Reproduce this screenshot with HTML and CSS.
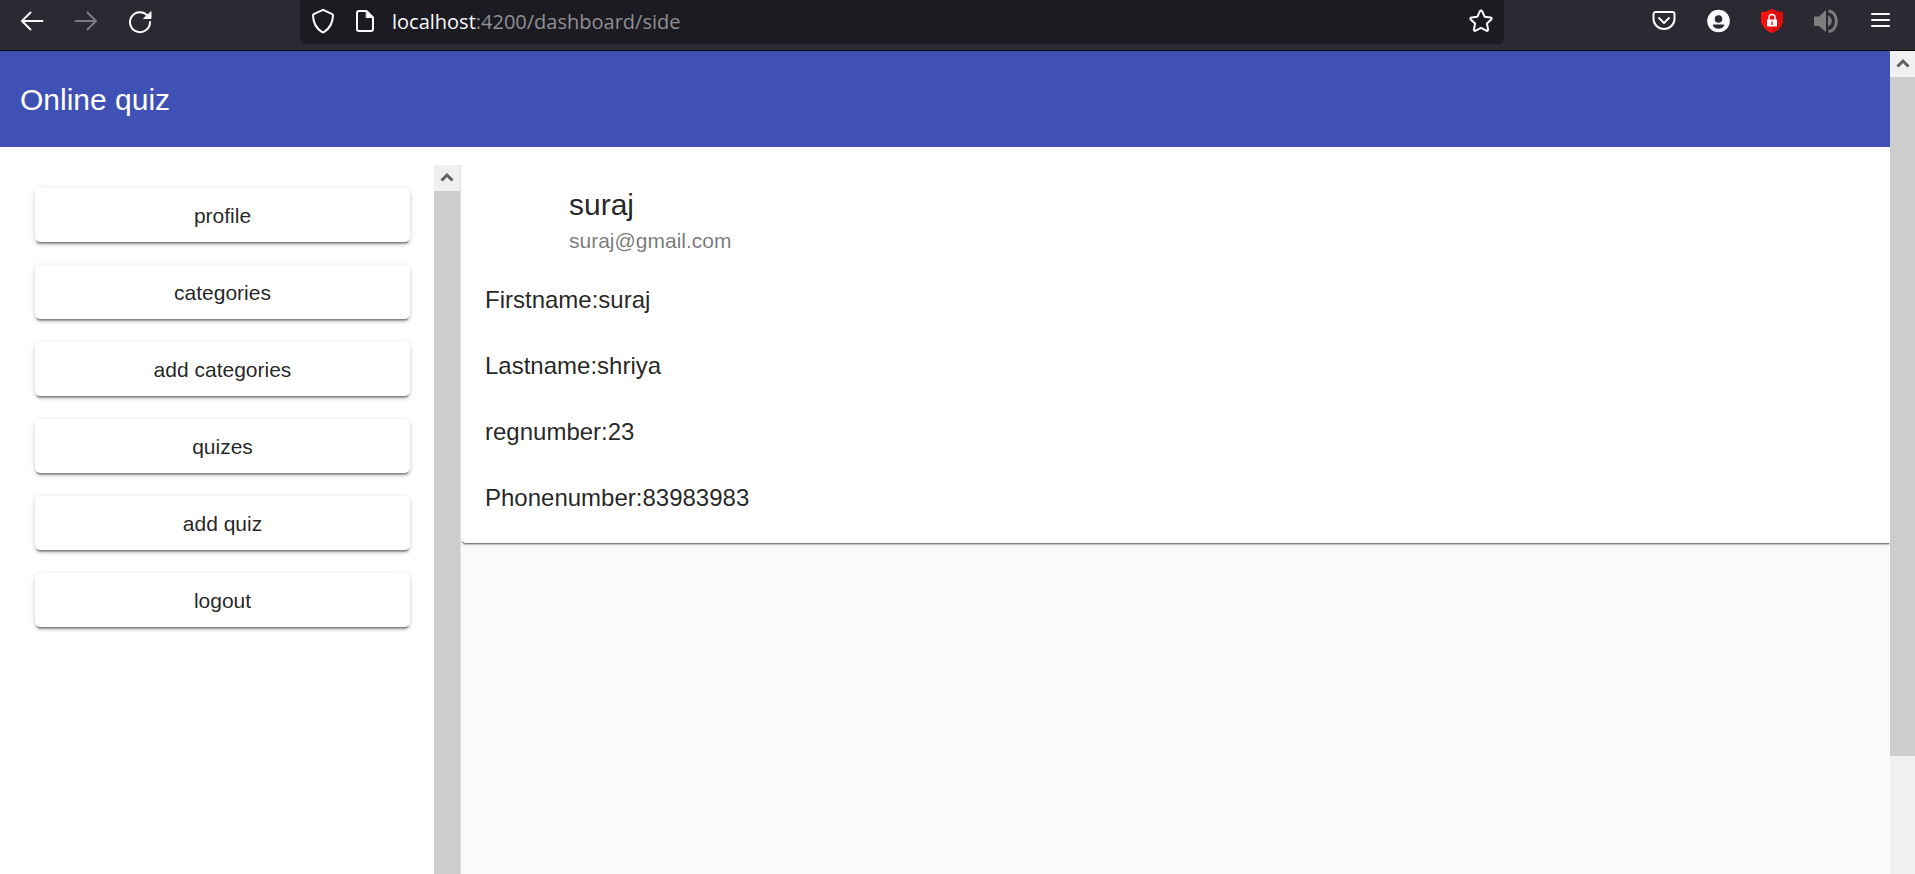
FILE: index.html
```
<!DOCTYPE html>
<html lang="en">
<head>
<meta charset="utf-8">
<title>Online quiz</title>
<link rel="stylesheet" href="styles.css">
</head>
<body>
<div class="browser">
  <div class="chrome">
    <nav class="chrome-nav" aria-label="Browser navigation">
      <button class="tool" aria-label="Back">
        <svg class="icon" viewBox="0 0 26 26"><path d="M23.500 13H3.500M11.500 4.500L3 13l8.500 8.500"/></svg>
      </button>
      <button class="tool tool-off" aria-label="Forward">
        <svg class="icon" viewBox="0 0 26 26"><path d="M2.500 13h20M14.500 4.500L23 13l-8.500 8.500"/></svg>
      </button>
      <button class="tool" aria-label="Reload">
        <svg class="icon" viewBox="0 0 26 26"><path d="M20.200 7.200A10 10 0 1 0 23 14"/><path class="solid" d="M24 4v6.500H17z"/></svg>
      </button>
    </nav>
    <div class="address">
      <button class="tool tool-small" aria-label="Tracking protection">
        <svg class="icon" viewBox="0 0 26 26"><path d="M13 1.800l9.300 4.400c.5.200.7.600.7 1.200-.2 7-3.300 13-8.800 16.400-.8.500-1.600.5-2.400 0C6.300 20.400 3.200 14.400 3 7.400c0-.6.200-1 .7-1.200z"/></svg>
      </button>
      <button class="tool tool-small" aria-label="Site information">
        <svg class="icon" viewBox="0 0 26 26"><path d="M14.500 3H7a2 2 0 0 0-2 2v16a2 2 0 0 0 2 2h12a2 2 0 0 0 2-2V9.500z"/><path class="solid" d="M14.500 2.500L21.500 9.500h-7z"/></svg>
      </button>
      <div class="url" role="textbox" aria-label="Address"><span class="url-host">localhost</span>:4200/dashboard/side</div>
      <button class="tool tool-small" aria-label="Bookmark this page">
        <svg class="icon" viewBox="0 0 26 26"><path d="M13 2.500c.5 0 .9.300 1.100.700l2.500 5.500 6 .7c1 .1 1.500 1.200.7 2l-4.400 4.100 1.200 6c.2 1-.8 1.700-1.700 1.200L13 19.800l-5.400 2.900c-.9.500-1.900-.2-1.700-1.200l1.200-6-4.400-4.100c-.8-.8-.3-1.900.7-2l6-.7 2.500-5.500c.2-.4.600-.7 1.100-.7z"/></svg>
      </button>
    </div>
    <div class="chrome-tools">
      <button class="tool" aria-label="Save to Pocket">
        <svg class="icon" viewBox="0 0 26 26"><path d="M4.500 4h17a2 2 0 0 1 2 2v5a10.500 10 0 0 1-21 0V6a2 2 0 0 1 2-2z"/><path d="M8 10l5 5 5-5"/></svg>
      </button>
      <button class="tool" aria-label="Account">
        <svg class="icon" viewBox="0 0 26 26"><circle class="solid-plain" cx="13.500" cy="13" r="11.300"/><circle class="hole" cx="13.500" cy="11" r="3.800"/><path class="hole" d="M8.500 16.500h10c.6 0 .9.500.7 1-.9 2-3 3.300-5.700 3.300s-4.800-1.300-5.700-3.300c-.2-.5.100-1 .7-1z"/></svg>
      </button>
      <button class="tool" aria-label="Blocker extension">
        <svg class="icon" viewBox="0 0 26 26"><path class="guard" d="M13 .800C16 3 20 4.200 24 4.200V12c0 6-4.500 10.500-11 13C6.500 22.500 2 18 2 12V4.200C6 4.200 10 3 13 .800z"/><path class="guard-shade" d="M13 .800C16 3 20 4.200 24 4.200V12c0 6-4.500 10.500-11 13z"/><path class="solid-plain" d="M8 11.500h10v7H8z"/><path class="shackle" d="M10 12V9.500a3 3 0 0 1 6 0V12"/><path class="guard" d="M12.300 13.500h1.400v3.500h-1.400z"/></svg>
      </button>
      <button class="tool tool-sound" aria-label="Sound">
        <svg class="icon" viewBox="0 0 26 26"><path class="fill" d="M1 8.500h5L13 2v22l-7-6H1z"/><path class="fill" d="M15 7.500c5 2 5 9 0 11z"/><path d="M15.500 3c10.500 1 10.500 19.500 0 20.500"/></svg>
      </button>
      <button class="tool" aria-label="Menu">
        <svg class="icon" viewBox="0 0 26 26"><path d="M5 6h17M5 12h17M5 18h17"/></svg>
      </button>
    </div>
  </div>

  <div class="viewport">
    <div class="page">
      <header class="toolbar"><h1 class="toolbar-title">Online quiz</h1></header>
      <div class="layout">
        <aside class="sidebar">
          <nav class="menu" aria-label="Dashboard">
            <button class="menu-item">profile</button>
            <button class="menu-item">categories</button>
            <button class="menu-item">add categories</button>
            <button class="menu-item">quizes</button>
            <button class="menu-item">add quiz</button>
            <button class="menu-item">logout</button>
          </nav>
          <div class="scrollbar scrollbar-side">
            <button class="scroll-up" aria-label="Scroll menu up"><svg class="chevron" viewBox="0 0 14 12"><path d="M1.500 8.500L7 3l5.500 5.500"/></svg></button>
            <div class="thumb"></div>
          </div>
        </aside>
        <main class="content">
          <section class="card">
            <div class="card-head">
              <h2 class="card-title">suraj</h2>
              <p class="card-subtitle">suraj@gmail.com</p>
            </div>
            <p class="field">Firstname:suraj</p>
            <p class="field">Lastname:shriya</p>
            <p class="field">regnumber:23</p>
            <p class="field">Phonenumber:83983983</p>
          </section>
        </main>
      </div>
    </div>
    <div class="scrollbar">
      <button class="scroll-up" aria-label="Scroll page up"><svg class="chevron" viewBox="0 0 14 12"><path d="M1.500 8.500L7 3l5.500 5.500"/></svg></button>
      <div class="thumb"></div>
      <div class="track-rest"></div>
    </div>
  </div>
</div>
</body>
</html>
```
FILE: styles.css
```
* { box-sizing: border-box; }

body {
  margin: 0;
  font-family: "Liberation Sans", Arial, sans-serif;
  color: rgba(0, 0, 0, 0.87);
}

h1, h2, p { margin: 0; font-weight: 400; }

button {
  border: 0;
  padding: 0;
  background: none;
  color: inherit;
  font: inherit;
}

.browser {
  display: flex;
  flex-direction: column;
  height: 100vh;
  overflow: hidden;
}

/* Browser toolbar */
.chrome {
  display: flex;
  flex: none;
  background: #2b2a33;
  border-bottom: 1px solid #0c0c0d;
  padding: 0 8px 6px 5px;
  color: #fbfbfe;
}

.chrome-nav { display: flex; width: 295px; }

.chrome-tools { display: flex; margin-left: 133px; }

.tool {
  display: flex;
  align-items: center;
  justify-content: center;
  width: 54px;
  height: 42px;
}

.chrome-tools .tool,
.tool-small { height: 41px; }
.tool-small { width: 42px; }
.tool-off { color: #7c7b81; }
.tool-sound { color: #7d7d7d; }

.icon {
  width: 26px;
  height: 26px;
  fill: none;
  stroke: currentColor;
  stroke-width: 2;
  stroke-linecap: round;
  stroke-linejoin: round;
}

.solid { fill: currentColor; stroke-width: 1; }
.solid-plain, .fill { fill: currentColor; stroke: none; }
.hole { fill: #2b2a33; stroke: none; }
.guard { fill: #fb1010; stroke: none; }
.guard-shade { fill: #de0d0d; stroke: none; }
.shackle { stroke-width: 1.5; }
.tool-sound .icon { stroke-width: 3; stroke-linecap: butt; }

.address {
  display: flex;
  flex: 1;
  align-items: flex-start;
  height: 44px;
  padding: 0 2px;
  background: #1c1b22;
  border-radius: 0 0 5px 5px;
}

.url {
  flex: 1;
  padding-left: 6px;
  font-family: "Open Sans", "Noto Sans", sans-serif;
  font-size: 20px;
  line-height: 44px;
  color: #8f8f94;
}

.url-host { color: #fbfbfe; }

/* Web page */
.viewport { display: flex; flex: 1; min-height: 0; }

.page {
  display: flex;
  flex: 1;
  flex-direction: column;
  min-width: 0;
  overflow: hidden;
  background: #fff;
}

.toolbar {
  display: flex;
  align-items: center;
  height: 96px;
  padding: 2px 20px 0;
  background: #3f51b5;
  color: #fff;
}

.toolbar-title { font-size: 30px; line-height: 40px; }

.layout { display: flex; flex: 1; padding-top: 18px; }

.sidebar {
  display: flex;
  flex: none;
  width: 461px;
  border-right: 1px solid #e0e0e0;
}

.menu {
  display: flex;
  flex: 1;
  flex-direction: column;
  gap: 23px;
  padding: 23px 24px 23px 35px;
}

.menu-item {
  height: 54px;
  padding-top: 2px;
  border-radius: 5px;
  background: #fff;
  font-size: 21px;
  line-height: 30px;
  box-shadow: 0 4px 1px -2px rgba(0, 0, 0, 0.2), 0 3px 3px 0 rgba(0, 0, 0, 0.14), 0 1px 6px 0 rgba(0, 0, 0, 0.12), 0 2px 1px -1px rgba(0, 0, 0, 0.2);
}

.content { flex: 1; background: #fafafa; overflow: hidden; }

.card {
  padding: 20px 24px 12px;
  border-radius: 5px 0 0 5px;
  background: #fff;
  box-shadow: 0 3px 1px -1px rgba(0, 0, 0, 0.2), 0 1px 1px 0 rgba(0, 0, 0, 0.14), 0 1px 4px 0 rgba(0, 0, 0, 0.12), 0 2px 0 -1px rgba(0, 0, 0, 0.2);
}

.card-head { padding: 0 84px 10px; }
.card-title { font-size: 30px; line-height: 40px; }
.card-subtitle { font-size: 21px; line-height: 32px; color: rgba(0, 0, 0, 0.54); }
.field { font-size: 24px; line-height: 30px; padding: 18px 0; }

/* Scrollbars */
.scrollbar {
  display: flex;
  flex: none;
  flex-direction: column;
  width: 25px;
  background: #f0f0f0;
}

.scrollbar-side { width: 26px; }

.scroll-up {
  display: flex;
  flex: none;
  align-items: center;
  justify-content: center;
  height: 26px;
}

.chevron {
  width: 14px;
  height: 12px;
  fill: none;
  stroke: #606060;
  stroke-width: 3;
}

.thumb { flex: 679; background: #cdcdcd; }
.track-rest { flex: 118; }
```
